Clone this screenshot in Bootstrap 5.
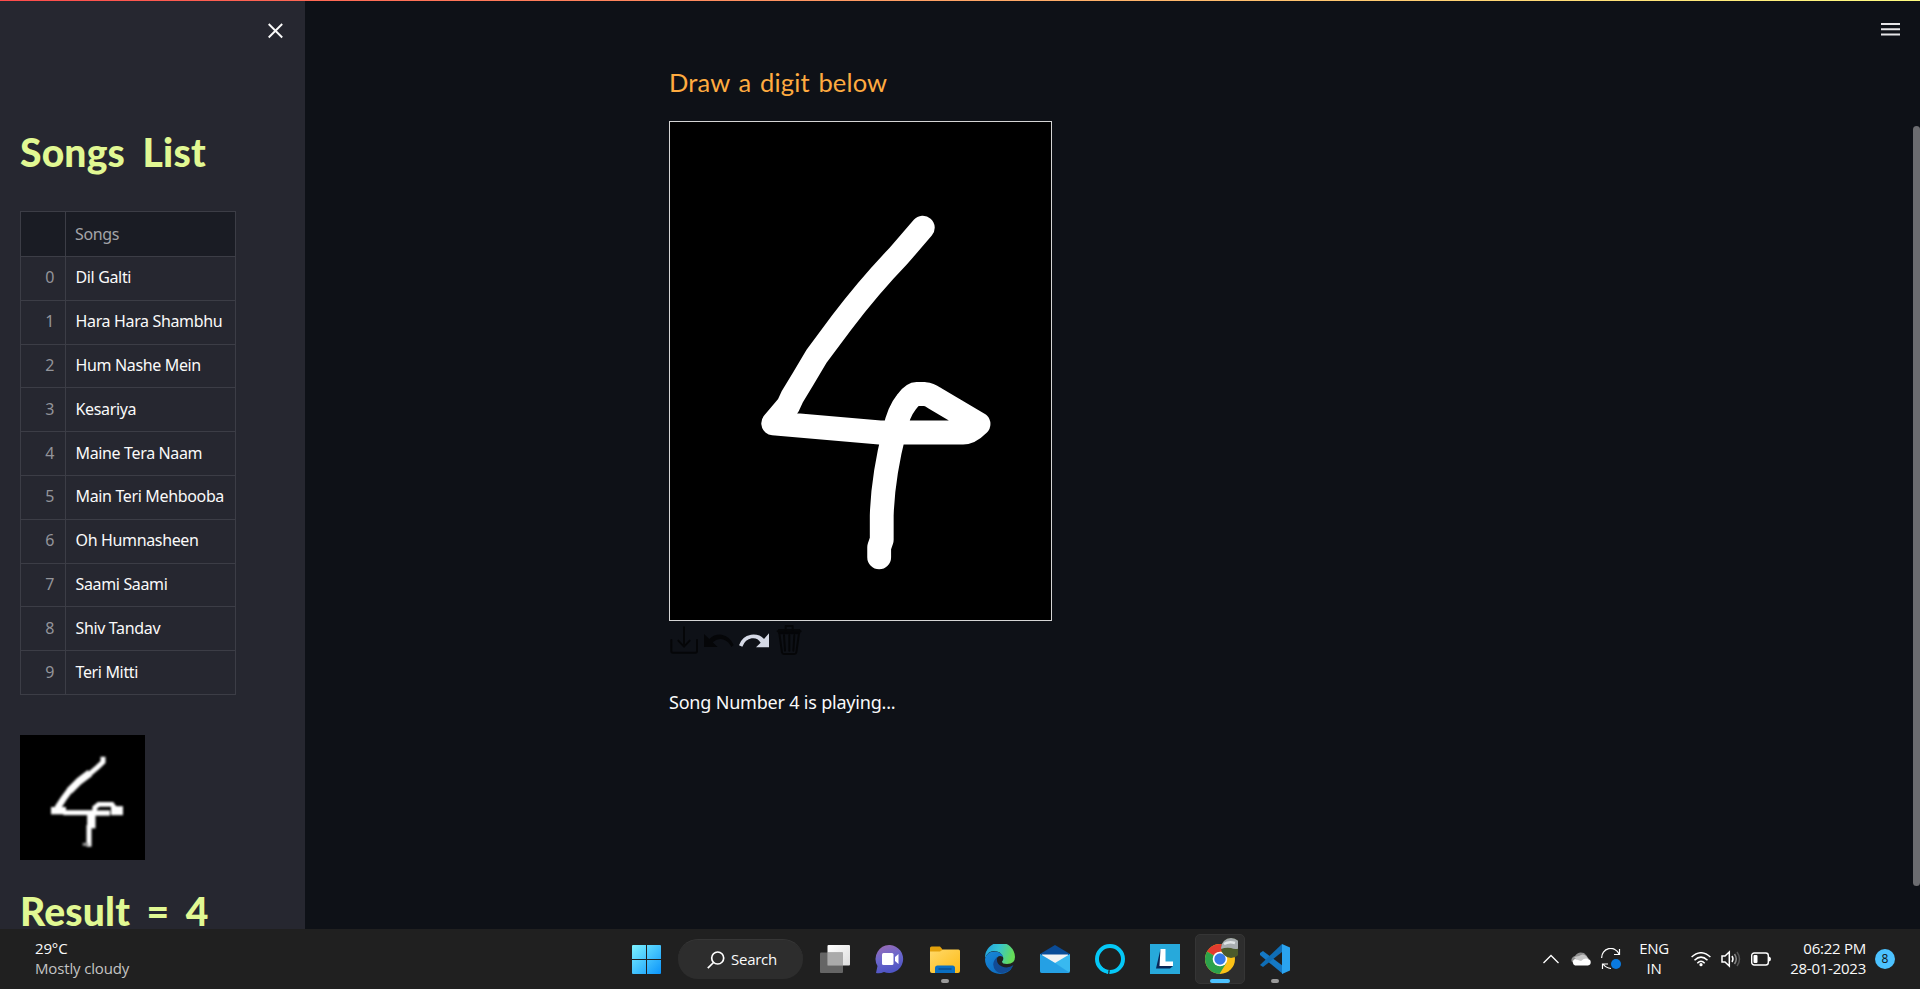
<!DOCTYPE html>
<html lang="en">
<head>
<meta charset="utf-8">
<title>Draw a digit</title>
<link href="https://cdn.jsdelivr.net/npm/bootstrap@5.3.0/dist/css/bootstrap.min.css" rel="stylesheet">
<script src="https://cdn.jsdelivr.net/npm/bootstrap@5.3.0/dist/js/bootstrap.bundle.min.js"></script>
<style>
body{background:#0e1117;color:#fafafa;font-family:"Noto Sans","Open Sans",sans-serif}
svg{display:block;flex:none}
.workspace{height:929px}
.top-line{height:1px;top:0;left:0;background:linear-gradient(90deg,#ff4b4b,#fffd80);z-index:5}
.side-panel{width:305px;background:#262730;padding:22px 20px 0}
.comic{font-family:"Comic Sans MS",Lato,sans-serif;white-space:nowrap}
.big-title{font-size:39px;font-weight:900;color:#e1f893;line-height:48px;letter-spacing:.2px;word-spacing:8px;margin-top:89px}
.result-title{margin-top:27px;word-spacing:7px}
.song-table{width:216px;margin-top:35px;font-size:16px;border-collapse:collapse;letter-spacing:-.35px;line-height:24px}
.song-table td,.song-table th{border:1px solid #3c3d46;height:43.8px;padding:0 9px 2px;font-weight:400;white-space:nowrap}
.song-table th{height:45px;background:#1a1c24;color:#a3a4a8;padding-bottom:0}
.song-table td:first-child{width:45px;color:#93949a;text-align:right;padding-right:11px}
.song-table td:last-child{color:#fafafa;padding-left:9.5px}
.thumb-digit{margin-top:40px}
.draw-col{width:383px;margin-left:364px;padding-top:65px}
.sub-title{font-size:25.5px;color:#ffab40;line-height:34px;letter-spacing:.15px;word-spacing:2px}
.pad{border:1px solid #d5d5d5;background:#000;width:383px;height:500px;margin-top:22px}
.status{font-size:18px;line-height:28px;letter-spacing:-.2px;margin-top:31px;white-space:nowrap}
.thumb-bar{width:7px;height:760px;right:0;top:126px;border-radius:4px;background:#6b6c70}
.task-strip{height:60px;background:#202020;font-family:"Open Sans","Noto Sans",sans-serif;font-size:15px;line-height:20px}
.lift{padding-bottom:2px}
.weather{width:584px;padding-left:35px;letter-spacing:-.15px}
.slot{width:55px;height:60px}
.pill{width:125px;height:40px;border-radius:20px;background:#2d2d2d;border-top:1px solid #363636;margin:0 4.5px 0 4px;padding-left:29px;gap:6px}
.tile{width:50px;height:50px;border-radius:5px;background:#2d2d2d;border:1px solid #353535}
.run-mark{width:8px;height:4px;border-radius:2px;background:#9a9a9a;bottom:6px;left:23px}
.run-mark.active-mark{width:20px;left:17px;background:#4cc2ff}
.count{width:20px;height:20px;border-radius:50%;background:#4cc2ff;color:#111;font-size:12px;line-height:20px}
</style>
</head>
<body class="vh-100 overflow-hidden d-flex flex-column">
<div class="top-line position-absolute w-100"></div>
<div class="workspace d-flex position-relative overflow-hidden">
  <aside class="side-panel flex-shrink-0 h-100">
    <div class="d-flex justify-content-end">
      <svg width="20" height="17" viewBox="0 0 20 17" fill="none" stroke="#fafafa" stroke-width="1.9"><path d="M3.700 2 17.200 15.500M17.200 2 3.700 15.500"/></svg>
    </div>
    <h1 class="big-title comic mb-0">Songs List</h1>
    <table class="song-table mb-0">
      <thead><tr><th></th><th>Songs</th></tr></thead>
      <tbody>
        <tr><td>0</td><td>Dil Galti</td></tr>
        <tr><td>1</td><td>Hara Hara Shambhu</td></tr>
        <tr><td>2</td><td>Hum Nashe Mein</td></tr>
        <tr><td>3</td><td>Kesariya</td></tr>
        <tr><td>4</td><td>Maine Tera Naam</td></tr>
        <tr><td>5</td><td>Main Teri Mehbooba</td></tr>
        <tr><td>6</td><td>Oh Humnasheen</td></tr>
        <tr><td>7</td><td>Saami Saami</td></tr>
        <tr><td>8</td><td>Shiv Tandav</td></tr>
        <tr><td>9</td><td>Teri Mitti</td></tr>
      </tbody>
    </table>
    <svg class="thumb-digit" width="125" height="125" viewBox="60 30 375 375">
      <defs><filter id="soft"><feGaussianBlur stdDeviation="3.500"/></filter></defs>
      <rect x="60" y="30" width="375" height="375" fill="#000"/>
      <g fill="none" stroke="#fff" filter="url(#soft)">
        <path stroke-width="15" d="M309 95V111L292 127 270 146"/>
        <path stroke-width="22" d="M270 144 238 168 208 198"/>
        <path stroke-width="19" d="M212 192 190 222 172 250"/>
        <path stroke-width="22" d="M153 257H198"/><path stroke-width="15" d="M190 263H280"/>
        <path stroke-width="14" d="M284 260V248L296 238H336L346 252"/>
        <path stroke-width="16" d="M276 264H330"/><path stroke-width="27" d="M333 257H369"/>
        <path stroke-width="25" d="M274 262V310"/><path stroke-width="15" d="M267 300V365"/><path stroke-width="9" stroke="#999" d="M248 358H266"/>
      </g>
    </svg>
    <h1 class="big-title result-title comic mb-0">Result = 4</h1>
  </aside>
  <main class="flex-grow-1">
    <div class="draw-col">
      <div class="sub-title comic">Draw a digit below</div>
      <div class="pad">
        <svg width="381" height="498" viewBox="60 195 1143 1347" preserveAspectRatio="none">
          <g transform="scale(1.1 1)" fill="none" stroke="#fff" stroke-width="65" stroke-linecap="round" stroke-linejoin="round">
            <path d="M744 481 677 558 Q600 637 523 737L454 829 418 889 388 938 377 962 336 1010 Q536 1027 627 1035H854Q873 1035 896 1012L775 941Q762 932 750 931H727Q715 931 699 953 677 980 667 1030 635 1155 632 1260V1325L625 1345V1372"/>
          </g>
        </svg>
      </div>
      <svg width="140" height="36" viewBox="57 66 420 108">
        <g fill="none" stroke="#050608" stroke-width="6" stroke-linecap="round" stroke-linejoin="round">
          <path d="M102 85V141M85 125 102 143 119 125M64 123V156Q64 161 69 161H136Q141 161 141 156V123"/>
          <path d="M383 97H452M388 103 396 160Q397 165 402 165H432Q438 165 439 160L447 103ZM407 94V81H428V94M402 109 405 155M418 109V155M433 109 430 155"/>
          <path d="M386 92H449V102H386Z" stroke-width="4"/>
        </g>
        <path fill="#050608" d="M162 105V144H203L188 130Q205 116 222 122 237 128 244 144L251 138Q240 112 215 107 193 105 178 120Z"/>
        <path fill="#d5d9e5" d="M357 103V145H318L332 131Q322 115 305 118 286 121 277 143L267 139Q275 112 303 107 328 104 342 120Z"/>
      </svg>
      <div class="status">Song Number 4 is playing...</div>
    </div>
  </main>
  <svg class="position-absolute" style="right:20px;top:22px" width="19" height="14" viewBox="0 0 19 14"><path d="M0 2H19M0 7.3H19M0 12.5H19" stroke="#e5e5e7" stroke-width="2"/></svg>
  <div class="thumb-bar position-absolute"></div>
</div>
<footer class="task-strip d-flex align-items-center text-nowrap flex-shrink-0">
  <div class="weather lift"><div>29°C</div><div style="color:#c4c4c4">Mostly cloudy</div></div>
  <div class="d-flex align-items-center" style="margin-left:35px">
    <div class="slot d-flex align-items-center justify-content-center">
      <svg width="29" height="29" viewBox="0 0 29 29"><defs><linearGradient id="win" x2="1" y2="1" gradientUnits="userSpaceOnUse" gradientTransform="scale(29)"><stop stop-color="#7df3ff"/><stop offset="1" stop-color="#0b94fb"/></linearGradient></defs><path fill="url(#win)" d="M0 1Q0 0 1 0H14V14H0ZM15 0H28Q29 0 29 1V14H15ZM0 15H14V29H1Q0 29 0 28ZM15 15H29V28Q29 29 28 29H15Z"/></svg>
    </div>
    <div class="pill d-flex align-items-center">
      <svg width="18" height="18" viewBox="0 0 18 18" fill="none" stroke="#fff" stroke-width="1.7"><circle cx="10.7" cy="7" r="6"/><path d="M6.5 11.5.8 17.2"/></svg>
      <span class="lift" style="letter-spacing:-.25px">Search</span>
    </div>
    <div class="slot d-flex align-items-center justify-content-center">
      <svg width="30" height="28" viewBox="0 0 30 28"><defs><linearGradient id="tv" x2="1" y2="1"><stop stop-color="#fff"/><stop offset="1" stop-color="#ddd"/></linearGradient></defs><rect x="7.5" width="22.5" height="20.5" rx="1" fill="url(#tv)"/><rect y="7.5" width="23" height="20.5" rx="1" fill="#6d6d6d" opacity=".9"/><path d="M7.500 7.500H23V20.500H7.500Z" fill="#aaa"/></svg>
    </div>
    <div class="slot d-flex align-items-center justify-content-center">
      <svg width="30" height="29" viewBox="0 0 30 29"><defs><linearGradient id="chat" x2=".3" y2="1"><stop stop-color="#a06bb0"/><stop offset=".5" stop-color="#6d67cb"/><stop offset="1" stop-color="#4f55c4"/></linearGradient></defs><path fill="url(#chat)" d="M15 0A14 14 0 1 1 9 27Q5 29 1 28L2.500 21A14 14 0 0 1 15 0Z"/><rect x="7" y="8" width="11.500" height="12" rx="1.500" fill="#fff"/><path fill="#fff" d="M20 12 23.500 9V19L20 16Z"/></svg>
    </div>
    <div class="slot position-relative d-flex align-items-center justify-content-center">
      <svg width="30" height="27" viewBox="0 0 30 27"><defs><linearGradient id="fold" x2="1" y2="1"><stop stop-color="#ffd969"/><stop offset="1" stop-color="#fdbb16"/></linearGradient></defs><path fill="#e3a10b" d="M0 2Q0 .5 1.500.5H10L13 4V9H0Z"/><path fill="url(#fold)" d="M0 5.500H10L13 3.500H28.500Q30 3.500 30 5V25Q30 27 28 27H2Q0 27 0 25Z"/><path fill="#0a6fc2" d="M5 27V22Q5 19.500 7.500 19.500H22.500Q25 19.500 25 22V27Z"/><path d="M8.500 23H21.500" stroke="#073e78"/></svg>
      <span class="run-mark position-absolute"></span>
    </div>
    <div class="slot d-flex align-items-center justify-content-center">
      <svg width="30" height="30" viewBox="0 0 30 30"><defs><linearGradient id="edg" x2="1" y2=".25"><stop stop-color="#1b9de2"/><stop offset=".5" stop-color="#37c5d1"/><stop offset="1" stop-color="#65dc58"/></linearGradient><linearGradient id="edb" x2="1" y2="1"><stop stop-color="#1789da"/><stop offset="1" stop-color="#0b62b6"/></linearGradient></defs><path fill="url(#edg)" d="M0 14A15 15 0 0 1 30 13Q30 20 22 20 17 20 17 17.500 19 16 18 13 16 7 9 7 3 7 0 14Z"/><path fill="url(#edb)" d="M0 15Q2 7 10 7.500 17 8 18 13 13 10 11 16 11 24 20 25 25 25 28 22 24 30 15 30A15 15 0 0 1 0 15Z"/><path fill="#124b94" d="M12 13Q5 20 11 27 17 32 25 26L28.500 21Q23 25 17 22.500 11 20 12 13Z"/></svg>
    </div>
    <div class="slot d-flex align-items-center justify-content-center">
      <svg width="30" height="28" viewBox="0 0 30 28"><path fill="#0a4c97" d="M0 9 15 0 30 9V14H0Z"/><path fill="#f3f3f3" d="M2 9.500H28V20H2Z"/><path fill="#38b9f0" d="M0 9 15 18 30 9V26Q30 28 28 28H2Q0 28 0 26Z"/><path fill="#168cdb" d="M15 18 30 28H2Q0 28 0 26V9L15 18Z" opacity=".55"/></svg>
    </div>
    <div class="slot d-flex align-items-center justify-content-center">
      <svg width="30" height="30" viewBox="0 0 30 30"><circle cx="15" cy="15" r="13" fill="none" stroke="#05c8f7" stroke-width="4"/><path fill="#05c8f7" d="M6 22Q8 24.500 10.500 25.300 13.500 26.800 13 30L5 26Z"/><path fill="#202020" d="M13 30.200Q13.700 28 13.100 26.500L15 26.300Q14.300 28.500 14.200 30.200Z"/></svg>
    </div>
    <div class="slot d-flex align-items-center justify-content-center">
      <svg width="30" height="30" viewBox="0 0 30 30"><rect width="30" height="30" fill="#27a9db"/><path fill="#092757" d="M10.500 5 6 24.500H20L23 22 12 17Z"/><path fill="#fff" d="M10.500 5H15.500V17.500H23V22H9.500Z"/></svg>
    </div>
    <div class="slot position-relative d-flex align-items-center justify-content-center">
      <div class="tile d-flex align-items-center justify-content-center">
        <svg width="36" height="36" viewBox="-3 -6 36 36" style="transform:translate(0,-3px)"><defs><clipPath id="ava"><circle cx="26" cy="4" r="10"/></clipPath></defs><circle cx="15" cy="15" r="15" fill="#fbc116"/><path fill="#e33b2e" d="M15 15 2 7.500A15 15 0 0 1 28 7.500H15Z"/><path fill="#2ca24c" d="M2 7.500A15 15 0 0 0 14.500 30L21.500 18.700 15 15Z"/><circle cx="15" cy="15" r="7.300" fill="#fff"/><circle cx="15" cy="15" r="5.700" fill="#3679e8"/><g clip-path="url(#ava)"><path fill="#4b5a2b" d="M16-6H36V14H16Z"/><path fill="#a8adb0" d="M16-6H36V4Q30 6 26 4 21 3 16 5Z"/><path d="M19 0Q24-3 30-1" stroke="#e0e4e6" stroke-width="2.500" fill="none"/></g></svg>
      </div>
      <span class="run-mark active-mark position-absolute"></span>
    </div>
    <div class="slot position-relative d-flex align-items-center justify-content-center">
      <svg width="30" height="30" viewBox="0 0 30 30"><path fill="#1579c5" d="M0 9 3 7 23 22V30L0 11Z"/><path fill="#0f6db5" d="M0 21 22 0V8L3 23 0 21Z"/><path fill="#2aa3ef" d="M22 0 30 3.500V26.500L22 30Z"/></svg>
      <span class="run-mark position-absolute"></span>
    </div>
  </div>
  <div class="d-flex align-items-center ms-auto" style="margin-right:25px">
    <svg width="16" height="10" viewBox="0 0 16 10" fill="none" stroke="#fff" stroke-width="1.3"><path d="M.5 9 8 1.500 15.500 9"/></svg>
    <svg width="20" height="14" viewBox="0 0 20 14" style="margin-left:12px"><path fill="#8d8d8d" d="M1 10A4 4 0 0 1 4 4Q7-1 13 1 16 3 17 7L8 12Z"/><path fill="#c6c6c6" d="M8 4Q12 1 15 4L18 7 8 10 3 5Z"/><path fill="#fff" d="M4 13.500A3.500 3.500 0 0 1 4 7Q7 8 10 9 14 5.500 17 7A3.300 3.300 0 0 1 17 13.500Z"/></svg>
    <svg width="21" height="22" viewBox="0 0 21 22" style="margin-left:10px" fill="none" stroke="#fff" stroke-width="1.200"><path d="M.7 10A9 9 0 0 1 18 6M18.500 1V6.500H13M7 16H1.500V21M2 16Q5 20 10 20.500"/><circle cx="15" cy="16" r="5" fill="#0a7ae0" stroke="none"/></svg>
    <div class="text-center lift" style="width:30px;margin-left:17px;letter-spacing:-.3px">ENG<br>IN</div>
    <svg width="20" height="15" viewBox="0 0 20 15" style="margin-left:22px" fill="none" stroke="#fff" stroke-width="1.500"><path d="M.6 5Q10-3.500 19.400 5M3.500 8.300Q10 2 16.500 8.300M6.300 11.200Q10 7.500 13.700 11.200"/><circle cx="10" cy="12.700" r="1.600" fill="#fff" stroke="none"/></svg>
    <svg width="20" height="18" viewBox="0 0 20 18" style="margin-left:10px" fill="none" stroke="#fff" stroke-width="1.500"><path d="M1 6H4L8.300 2V16L4 12H1ZM11 6Q13 9 11 12"/><path stroke="#888" d="M13.500 4Q17 9 13.500 14"/><path stroke="#555" d="M16 2Q21 9 16 16"/></svg>
    <svg width="20" height="14" viewBox="0 0 20 14" style="margin-left:10px"><rect x=".7" y="1" width="16.600" height="12" rx="2.500" fill="none" stroke="#fff" stroke-width="1.400"/><rect x="2.500" y="3" width="4" height="8" rx="1" fill="#fff"/><path d="M18 4.500Q20 5 20 7T18 9.500Z" fill="#fff"/></svg>
    <div class="text-end lift" style="width:85px;margin-left:10px;letter-spacing:-.25px">06:22 PM<br>28-01-2023</div>
    <div class="count text-center" style="margin-left:9px">8</div>
  </div>
</footer>
</body>
</html>
